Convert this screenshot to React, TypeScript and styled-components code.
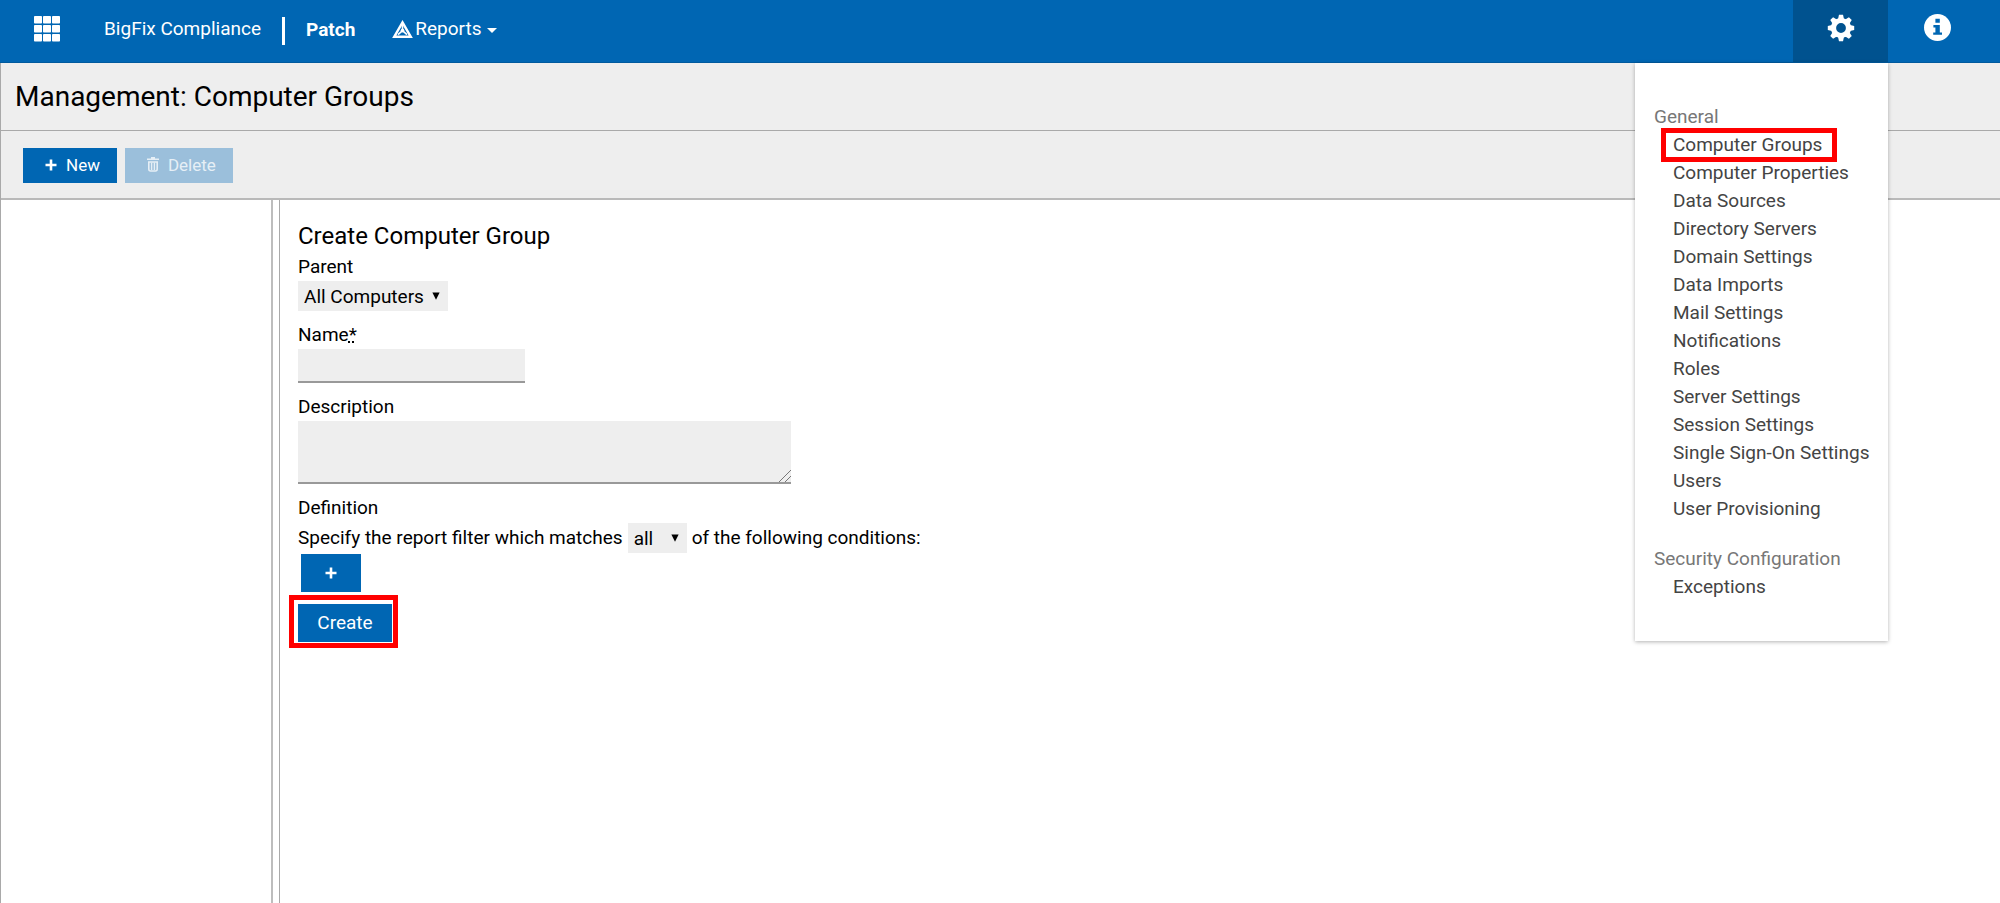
import React from "react";
import styled, { createGlobalStyle, css } from "styled-components";

const blue = "#0066b3";
const darkBlue = "#00528f";
const fieldGrey = "#eeeeee";
const ruleGrey = "#a9a9a9";

const GlobalStyle = createGlobalStyle`
  *, *::before, *::after { box-sizing: border-box; }
  body {
    margin: 0;
    background: #ffffff;
    color: #000000;
    font-family: Roboto, "Liberation Sans", sans-serif;
    font-size: 19px;
    line-height: 28px;
  }
  button, input, select, textarea { font: inherit; color: inherit; }
`;

const Page = styled.div`
  display: flex;
  flex-direction: column;
  min-height: 100vh;
`;

const Header = styled.header`
  display: flex;
  align-items: stretch;
  height: 63px;
  background: ${blue};
  border-bottom: 1px solid #005a9e;
  color: #ffffff;
`;

const AppsButton = styled.button`
  display: flex;
  align-items: center;
  justify-content: center;
  width: 93px;
  padding: 0 0 5px;
  background: none;
  border: 0;
  color: inherit;
`;

const Nav = styled.nav`
  display: flex;
  flex: 1;
  align-items: center;
  padding: 0 0 4px 11px;
`;

const NavLink = styled.a<{ $strong?: boolean }>`
  padding-top: ${(p) => (p.$strong ? 2 : 0)}px;
  color: inherit;
  text-decoration: none;
  font-weight: ${(p) => (p.$strong ? 700 : 400)};
`;

const NavDivider = styled.span`
  width: 3px;
  height: 28px;
  margin: 4px 21px 0;
  background: currentColor;
`;

const ReportsButton = styled.button`
  display: flex;
  align-items: center;
  gap: 2px;
  margin-left: 37px;
  padding: 0;
  background: none;
  border: 0;
`;

const Caret = styled.span`
  margin: 2px 0 0 3px;
  border: 5px solid transparent;
  border-top-color: currentColor;
  border-bottom: 0;
`;

const HeaderAction = styled.button<{ $active?: boolean }>`
  display: flex;
  align-items: center;
  justify-content: center;
  width: 100%;
  height: 62px;
  padding: 0 0 7px;
  border: 0;
  background: ${(p) => (p.$active ? darkBlue : "transparent")};
  color: inherit;
`;

const SettingsSlot = styled.div`
  position: relative;
  width: 95px;
`;

const InfoSlot = styled.div`
  width: 112px;
  padding-right: 14px;
`;

const Menu = styled.div`
  position: absolute;
  z-index: 2;
  top: 63px;
  right: 0;
  width: 253px;
  padding: 40px 19px;
  background: #ffffff;
  box-shadow: 0 1px 4px rgba(0, 0, 0, 0.3);
  white-space: nowrap;
`;

const MenuGroup = styled.section`
  & + & { margin-top: 22px; }
`;

const MenuHeading = styled.h2`
  margin: 0;
  color: #777777;
  font-size: 19px;
  font-weight: 400;
`;

const MenuList = styled.ul`
  margin: 0;
  padding: 0 0 0 19px;
  list-style: none;
`;

const MenuLink = styled.a`
  color: #444444;
  text-decoration: none;
`;

const highlight = css<{ $highlighted?: boolean }>`
  ${(p) =>
    p.$highlighted &&
    css`
      position: relative;
      &::after {
        content: "";
        position: absolute;
        inset: -3px -15px -3px -12px;
        border: 5px solid #ff0000;
        pointer-events: none;
      }
    `}
`;

const MenuItem = styled.li<{ $highlighted?: boolean }>`
  width: fit-content;
  ${highlight}
`;

const Body = styled.main`
  display: flex;
  flex: 1;
  flex-direction: column;
  border-left: 1px solid ${ruleGrey};
`;

const TitleBar = styled.div`
  display: flex;
  align-items: center;
  height: 68px;
  padding: 0 14px;
  background: ${fieldGrey};
  border-bottom: 1px solid ${ruleGrey};
`;

const Title = styled.h1`
  margin: 0;
  font-size: 28px;
  font-weight: 400;
`;

const Toolbar = styled.div`
  display: flex;
  align-items: center;
  gap: 8px;
  height: 69px;
  padding: 2px 22px 0;
  background: ${fieldGrey};
  border-bottom: 2px solid #b9b9b9;
`;

const ActionButton = styled.button`
  display: inline-flex;
  align-items: center;
  justify-content: center;
  gap: 9px;
  height: 35px;
  padding: 0 17px 2px 22px;
  border: 0;
  background: ${blue};
  color: #ffffff;
  font-size: 17px;
  &:disabled { background: #9bbfdb; color: #e6eff6; }
`;

const Panels = styled.div`
  display: flex;
  flex: 1;
`;

const TreePanel = styled.aside`
  width: 272px;
  border-right: 2px solid #bdbdbd;
`;

const Splitter = styled.div`
  width: 7px;
  border-right: 1px solid ${ruleGrey};
`;

const Form = styled.form`
  flex: 1;
  padding: 20px 18px;
`;

const FormTitle = styled.h2`
  margin: 0 0 1px;
  font-size: 24px;
  font-weight: 400;
  line-height: 32px;
`;

const Field = styled.div`
  display: flex;
  flex-direction: column;
  align-items: flex-start;
  margin-bottom: 10px;
`;

const Label = styled.label`
  line-height: 28px;
`;

const Required = styled.abbr`
  text-decoration: underline dotted;
`;

const SelectBox = styled.span`
  display: inline-grid;
  align-items: center;
  background: ${fieldGrey};
  & > * { grid-area: 1 / 1; }
`;

const Select = styled.select<{ $width: number }>`
  appearance: none;
  width: ${(p) => p.$width}px;
  height: 30px;
  padding: 1px 6px 0;
  border: 0;
  border-radius: 0;
  background: transparent;
`;

const SelectArrow = styled.svg`
  justify-self: end;
  margin-right: 8px;
  pointer-events: none;
`;

const TextInput = styled.input`
  width: 227px;
  height: 34px;
  padding: 0 5px;
  border: 0;
  border-bottom: 2px solid #999999;
  border-radius: 0;
  background: ${fieldGrey};
`;

const TextArea = styled.textarea`
  width: 493px;
  height: 63px;
  padding: 5px;
  border: 0;
  border-bottom: 2px solid #999999;
  border-radius: 0;
  background: ${fieldGrey};
  &::-webkit-resizer {
    background: linear-gradient(
      135deg,
      transparent 58%,
      #777777 58% 62%,
      transparent 62% 78%,
      #777777 78% 82%,
      transparent 82%
    );
  }
`;

const Conditions = styled.fieldset`
  margin: 0;
  padding: 0;
  border: 0;
`;

const Legend = styled.legend`
  padding: 0;
`;

const Sentence = styled.div`
  display: flex;
  align-items: center;
  gap: 5px;
  height: 32px;
`;

const AddButton = styled.button`
  display: flex;
  align-items: center;
  justify-content: center;
  width: 60px;
  height: 38px;
  margin: 0 0 12px 3px;
  padding: 0;
  border: 0;
  background: ${blue};
  color: #ffffff;
`;

const SubmitSlot = styled.div`
  position: relative;
  width: fit-content;
  &::after {
    content: "";
    position: absolute;
    inset: -9px -6px -6px -9px;
    border: 5px solid #ff0000;
    pointer-events: none;
  }
`;

const SubmitButton = styled.button`
  display: block;
  width: 94px;
  height: 38px;
  padding: 0;
  border: 0;
  background: ${blue};
  color: #ffffff;
`;

const GridIcon = () => (
  <svg width="26" height="26" viewBox="0 0 26 26" fill="currentColor" aria-hidden="true">
    {[0, 9, 18].map((y) => [0, 9, 18].map((x) => <rect key={`${x}-${y}`} x={x} y={y} width="8" height="7.5" rx="0.8" />))}
  </svg>
);

const ReportsIcon = () => (
  <svg width="21" height="19" viewBox="0 0 21 19" fill="none" stroke="currentColor" aria-hidden="true">
    <path d="M10.5 2.4 L18.8 16.8 H2.2 Z" strokeWidth="2.4" />
    <path d="M10.5 4 V10.6 L6 14.6 M10.5 10.6 L15 14.6" strokeWidth="1.6" />
    <circle cx="10.5" cy="10.6" r="1.9" fill="currentColor" stroke="none" />
  </svg>
);

const GearIcon = () => (
  <svg width="28" height="28" viewBox="0 0 28 28" aria-hidden="true">
    <g fill="currentColor">
      {[0, 45, 90, 135, 180, 225, 270, 315].map((a) => (
        <path key={a} d="M10.8 6 L12 0.8 H16 L17.2 6 Z" transform={`rotate(${a} 14 14)`} />
      ))}
    </g>
    <circle cx="14" cy="14" r="7.5" fill="none" stroke="currentColor" strokeWidth="5.2" />
  </svg>
);

const InfoIcon = () => (
  <svg width="27" height="27" viewBox="0 0 27 27" aria-hidden="true">
    <circle cx="13.5" cy="13.5" r="13.5" fill="currentColor" />
    <path d="M11.4 4.8 h4.4 v4 h-4.4 z M9.4 11 h6.4 v7.4 h2.2 v2.4 h-8.8 v-2.4 h2.2 v-5 h-2 z" fill={blue} />
  </svg>
);

const PlusIcon = () => (
  <svg width="12" height="12" viewBox="0 0 12 12" fill="none" stroke="currentColor" strokeWidth="2.6" aria-hidden="true">
    <path d="M6 0.5 V11.5 M0.5 6 H11.5" />
  </svg>
);

const TrashIcon = () => (
  <svg width="12" height="15" viewBox="0 0 12 15" fill="none" stroke="currentColor" aria-hidden="true">
    <path d="M0 2.2 H12 M4 0.8 H8" strokeWidth="1.6" />
    <path d="M1.8 5 H10.2 V12 Q10.2 14 8.4 14 H3.6 Q1.8 14 1.8 12 Z" strokeWidth="1.6" />
    <path d="M4.6 5.5 V13 M7.4 5.5 V13" strokeWidth="1.4" />
  </svg>
);

const Arrow = () => (
  <SelectArrow width="8" height="8" viewBox="0 0 8 8" aria-hidden="true">
    <path d="M0.4 0.4 H7.6 L4 7.8 Z" fill="currentColor" />
  </SelectArrow>
);

const menuGroups = [
  {
    heading: "General",
    items: [
      "Computer Groups",
      "Computer Properties",
      "Data Sources",
      "Directory Servers",
      "Domain Settings",
      "Data Imports",
      "Mail Settings",
      "Notifications",
      "Roles",
      "Server Settings",
      "Session Settings",
      "Single Sign-On Settings",
      "Users",
      "User Provisioning",
    ],
  },
  { heading: "Security Configuration", items: ["Exceptions"] },
];

export default function App() {
  return (
    <Page>
      <GlobalStyle />
      <Header>
        <AppsButton type="button" aria-label="Applications">
          <GridIcon />
        </AppsButton>
        <Nav>
          <NavLink href="#home">BigFix Compliance</NavLink>
          <NavDivider />
          <NavLink href="#patch" $strong>Patch</NavLink>
          <ReportsButton type="button">
            <ReportsIcon />
            Reports
            <Caret />
          </ReportsButton>
        </Nav>
        <SettingsSlot>
          <HeaderAction type="button" $active aria-label="Settings" aria-expanded="true">
            <GearIcon />
          </HeaderAction>
          <Menu>
            {menuGroups.map((group) => (
              <MenuGroup key={group.heading}>
                <MenuHeading>{group.heading}</MenuHeading>
                <MenuList>
                  {group.items.map((item) => (
                    <MenuItem key={item} $highlighted={item === "Computer Groups"}>
                      <MenuLink href="#settings">{item}</MenuLink>
                    </MenuItem>
                  ))}
                </MenuList>
              </MenuGroup>
            ))}
          </Menu>
        </SettingsSlot>
        <InfoSlot>
          <HeaderAction type="button" aria-label="Information">
            <InfoIcon />
          </HeaderAction>
        </InfoSlot>
      </Header>
      <Body>
        <TitleBar>
          <Title>Management: Computer Groups</Title>
        </TitleBar>
        <Toolbar>
          <ActionButton type="button">
            <PlusIcon />
            New
          </ActionButton>
          <ActionButton type="button" disabled>
            <TrashIcon />
            Delete
          </ActionButton>
        </Toolbar>
        <Panels>
          <TreePanel />
          <Splitter />
          <Form>
            <FormTitle>Create Computer Group</FormTitle>
            <Field>
              <Label htmlFor="parent">Parent</Label>
              <SelectBox>
                <Select id="parent" $width={150}>
                  <option>All Computers</option>
                </Select>
                <Arrow />
              </SelectBox>
            </Field>
            <Field>
              <Label htmlFor="name">
                Name<Required title="required">*</Required>
              </Label>
              <TextInput id="name" type="text" />
            </Field>
            <Field>
              <Label htmlFor="description">Description</Label>
              <TextArea id="description" />
            </Field>
            <Conditions>
              <Legend>Definition</Legend>
              <Sentence>
                <label htmlFor="match">Specify the report filter which matches</label>
                <SelectBox>
                  <Select id="match" $width={59}>
                    <option>all</option>
                  </Select>
                  <Arrow />
                </SelectBox>
                <span>of the following conditions:</span>
              </Sentence>
              <AddButton type="button" aria-label="Add condition">
                <PlusIcon />
              </AddButton>
            </Conditions>
            <SubmitSlot>
              <SubmitButton type="button">Create</SubmitButton>
            </SubmitSlot>
          </Form>
        </Panels>
      </Body>
    </Page>
  );
}
